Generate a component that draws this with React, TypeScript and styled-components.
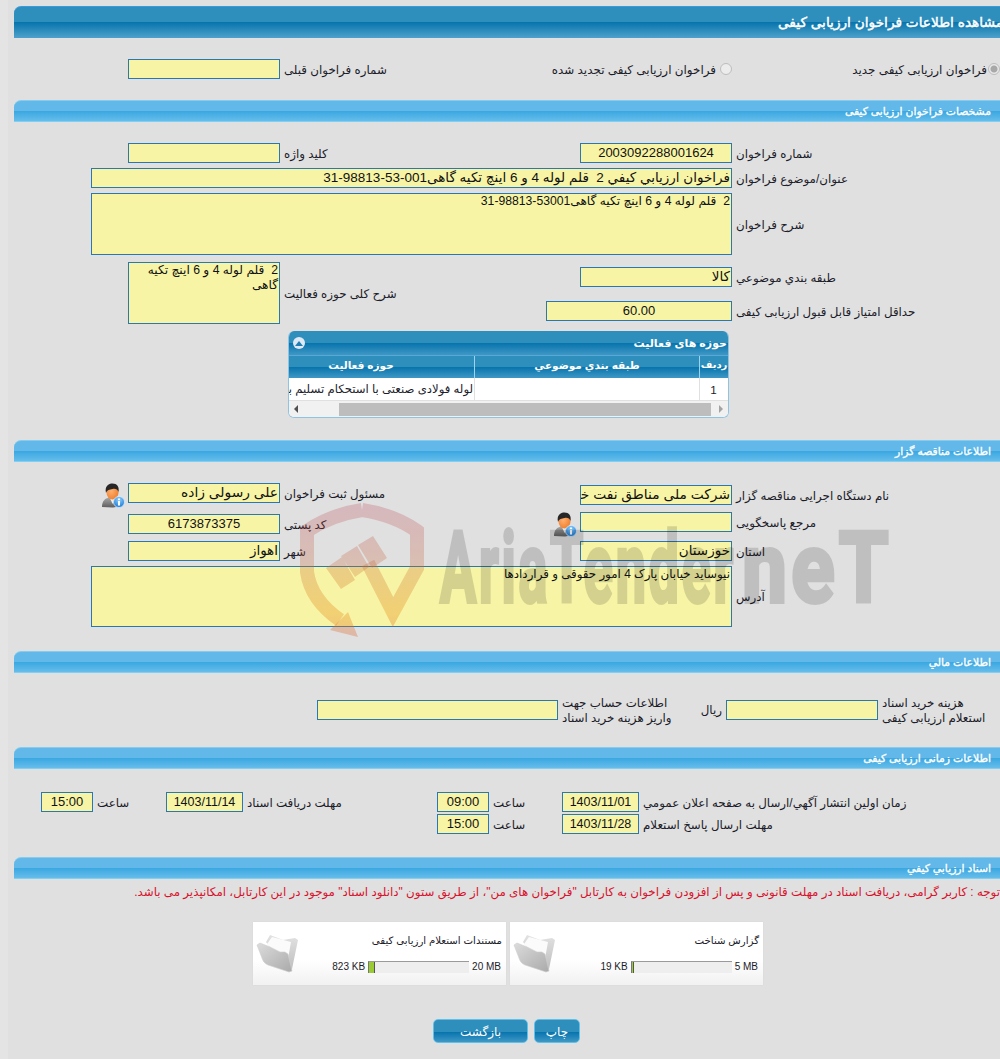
import React from 'react'
import styled, { createGlobalStyle } from 'styled-components'

const GlobalStyle = createGlobalStyle`
html, body {
  margin: 0;
  padding: 0;
  background: #e0e0e0;
  overflow: hidden;
}
`

const PersonInfoIcon = () => (
  <svg width="24" height="25" viewBox="0 0 24 25">
    <defs>
      <linearGradient id="suit" x1="0" y1="0" x2="0" y2="1">
        <stop offset="0" stopColor="#a8a8a8" />
        <stop offset="1" stopColor="#5e5e5e" />
      </linearGradient>
      <radialGradient id="face" cx="0.4" cy="0.4" r="0.7">
        <stop offset="0" stopColor="#ffb070" />
        <stop offset="1" stopColor="#ee7a28" />
      </radialGradient>
      <radialGradient id="info" cx="0.5" cy="0.3" r="0.7">
        <stop offset="0" stopColor="#8fd0fb" />
        <stop offset="1" stopColor="#1a78d8" />
      </radialGradient>
    </defs>
    <path d="M1 24 C1 18 4 15.500 8 14.500 L11.500 18 L15 14.500 C18 15 20 17 21 23 L12 24.500 Z" fill="url(#suit)" />
    <path d="M9 15 L11.500 21 L14 15 Z" fill="#eeeeee" />
    <ellipse cx="11.500" cy="9.500" rx="6" ry="7" fill="url(#face)" />
    <path d="M5 10 C3.500 3 7.500 0.500 11.500 0.500 C16 0.500 18.500 3.500 17.500 9 C16.500 6 14.500 5.500 11.500 6 C8.500 6.500 6 7 5 10 Z" fill="#262626" />
    <circle cx="18" cy="19" r="5.500" fill="url(#info)" stroke="#d8eefc" strokeWidth="0.8" />
    <rect x="17" y="18" width="2" height="4.500" fill="#fff" />
    <rect x="17" y="15.500" width="2" height="1.600" fill="#fff" />
  </svg>
)

const FolderIcon = () => (
  <svg width="44" height="40" viewBox="0 0 44 40">
    <defs>
      <linearGradient id="folderFront" x1="0" y1="0" x2="1" y2="1">
        <stop offset="0" stopColor="#dcdcdc" />
        <stop offset="1" stopColor="#aaaaaa" />
      </linearGradient>
      <linearGradient id="folderBack" x1="0" y1="0" x2="0" y2="1">
        <stop offset="0" stopColor="#e2e2e2" />
        <stop offset="1" stopColor="#bdbdbd" />
      </linearGradient>
    </defs>
    <path d="M10 8 L14 1 L27 6 L39 4 L42 6 L36 35 L32 37 Z" fill="url(#folderBack)" />
    <path d="M11 10 L16 3 L35 8 L31 30 Z" fill="#fbfbfb" />
    <path d="M1 11 L4 9 L14 13 L24 18 L29 18 L32 20 L36 37 L33 38 L12 31 C8 29 7 27 6 24 Z" fill="url(#folderFront)" stroke="#cfcfcf" strokeWidth="0.6" />
  </svg>
)

const Watermark = () => (
  <WatermarkLayer aria-hidden="true">
    <svg width="140" height="145" viewBox="295 498 140 145">
      <defs>
        <linearGradient id="shield" gradientUnits="userSpaceOnUse" x1="0" y1="505" x2="0" y2="640">
          <stop offset="0" stopColor="#b0243a" stopOpacity="0.21" />
          <stop offset="0.45" stopColor="#c86a3a" stopOpacity="0.28" />
          <stop offset="0.8" stopColor="#e8901a" stopOpacity="0.36" />
          <stop offset="1" stopColor="#d8502a" stopOpacity="0.3" />
        </linearGradient>
      </defs>
      <path
        d="M362 510 Q395 515 417 531 L417 568 L393 612 L368 563 M362 510 Q330 515 307 531 L307 572 Q311 600 340 620"
        fill="none"
        stroke="url(#shield)"
        strokeWidth="14"
        strokeLinejoin="miter"
      />
      <path
        d="M348 612 L358 637 L330 630 Z M326 568 L342 557 L355 580 L341 589 Z M341 556 L357 546 L369 567 L355 577 Z M358 545 L373 536 L387 558 L372 568 Z"
        fill="url(#shield)"
      />
    </svg>
    <WatermarkText>AriaTender</WatermarkText>
    <WatermarkNet>neT</WatermarkNet>
  </WatermarkLayer>
)

const App: React.FC = () => {
  return (
    <Page>
      <GlobalStyle />
      <Sheet>
        <TitleBar><span>مشاهده اطلاعات فراخوان ارزیابی کیفی</span></TitleBar>

        <Row $top={21}>
          <Option $w={268} $gap={1}><Radio $checked /><span>فراخوان ارزیابی کیفی جدید</span></Option>
          <Option $w={345} $gap={4}><Radio /><span>فراخوان ارزیابی کیفی تجدید شده</span></Option>
          <Label $w={107}>شماره فراخوان قبلی</Label>
          <Box $w={152} />
        </Row>

        <SectionHead $top={21}>مشخصات فراخوان ارزیابی کیفی</SectionHead>
        <Row $top={21}>
          <Label $w={268}>شماره فراخوان</Label>
          <Box $w={152} $center>2003092288001624</Box>
          <Label $w={300}>کلید واژه</Label>
          <Box $w={152} />
        </Row>
        <Row $top={5}>
          <Label $w={268}>عنوان/موضوع فراخوان</Label>
          <Box $w={641}>فراخوان ارزيابي کيفي 2&nbsp; قلم لوله 4 و 6 اینچ تکیه گاهی001-53-98813-31</Box>
        </Row>
        <Row $top={5}>
          <Label $w={268}>شرح فراخوان</Label>
          <Box $w={641} $h={62} $multi>2&nbsp; قلم لوله 4 و 6 اینچ تکیه گاهی53001-98813-31</Box>
        </Row>
        <Row $top={7}>
          <Stack $w={454}>
            <Row $top={5}>
              <Label $w={268}>طبقه بندي موضوعي</Label>
              <Box $w={152}>کالا</Box>
            </Row>
            <Row $top={14}>
              <Label $w={268}>حداقل امتیاز قابل قبول ارزیابی کیفی</Label>
              <Box $w={186} $center>60.00</Box>
            </Row>
          </Stack>
          <Label $w={266}>شرح کلی حوزه فعالیت</Label>
          <Box $w={152} $h={62} $multi>2&nbsp; قلم لوله 4 و 6 اینچ تکیه گاهی</Box>
        </Row>

        <GridPanel>
          <GridTitle>
            <span>حوزه های فعالیت</span>
            <Collapse>
              <svg width="8" height="5" viewBox="0 0 8 5"><path d="M0 5 L4 0 L8 5 Z" fill="#1f7fb5" /></svg>
            </Collapse>
          </GridTitle>
          <GridHead>
            <HeadCell $size={10}>رديف</HeadCell>
            <HeadCell>طبقه بندي موضوعي</HeadCell>
            <HeadCell>حوزه فعالیت</HeadCell>
          </GridHead>
          <GridRow>
            <DataCell $center>1</DataCell>
            <DataCell />
            <DataCell>لوله فولادی صنعتی با استحکام تسلیم بالا</DataCell>
          </GridRow>
          <ScrollBar>
            <ScrollArrow $right />
            <ScrollThumb />
            <ScrollArrow />
          </ScrollBar>
        </GridPanel>

        <SectionHead $top={22}>اطلاعات مناقصه گزار</SectionHead>
        <Row $top={21} $start>
          <Pair $top={2}>
            <Label $w={268}>نام دستگاه اجرایی مناقصه گزار</Label>
            <Box $w={152} $size={13.8}>شرکت ملی مناطق نفت خیز جنوب</Box>
          </Pair>
          <Pair>
            <Label $w={300}>مسئول ثبت فراخوان</Label>
            <Box $w={152} $size={13.8}>علی رسولی زاده</Box>
            <IconSlot><PersonInfoIcon /></IconSlot>
          </Pair>
        </Row>
        <Row $top={7} $start>
          <Pair>
            <Label $w={268}>مرجع پاسخگویی</Label>
            <Box $w={152} />
            <IconSlot><PersonInfoIcon /></IconSlot>
          </Pair>
          <Pair $top={2}>
            <Label $w={273}>کد پستی</Label>
            <Box $w={152} $center>6173873375</Box>
          </Pair>
        </Row>
        <Row $top={7}>
          <Label $w={268}>استان</Label>
          <Box $w={152}>خوزستان</Box>
          <Label $w={300}>شهر</Label>
          <Box $w={152}>اهواز</Box>
        </Row>
        <Row $top={5}>
          <Label $w={268}>آدرس</Label>
          <Box $w={641} $h={61} $multi $size={11.85}>نیوساید خیابان پارک 4 امور حقوقی و قراردادها</Box>
        </Row>

        <SectionHead $top={24}>اطلاعات مالي</SectionHead>
        <Row $top={27} $fixed>
          <Label $w={122}>هزینه خرید اسناد<br />استعلام ارزیابی کیفی</Label>
          <Box $w={152} />
          <Unit>ریال</Unit>
          <Label $w={146}>اطلاعات حساب جهت<br />واریز هزینه خرید اسناد</Label>
          <Box $w={241} />
        </Row>

        <SectionHead $top={27}>اطلاعات زمانی ارزیابی کیفی</SectionHead>
        <Row $top={23}>
          <Label $w={361}>زمان اولین انتشار آگهي/ارسال به صفحه اعلان عمومي</Label>
          <Box $w={77} $center $size={12.5}>1403/11/01</Box>
          <Label $w={73}>ساعت</Label>
          <Box $w={52} $center>09:00</Box>
          <Label $w={194}>مهلت دریافت اسناد</Label>
          <Box $w={77} $center $size={12.5}>1403/11/14</Box>
          <Label $w={73}>ساعت</Label>
          <Box $w={52} $center>15:00</Box>
        </Row>
        <Row $top={2}>
          <Label $w={361}>مهلت ارسال پاسخ استعلام</Label>
          <Box $w={77} $center $size={12.5}>1403/11/28</Box>
          <Label $w={73}>ساعت</Label>
          <Box $w={52} $center>15:00</Box>
        </Row>

        <SectionHead $top={23}>اسناد ارزیابي کیفي</SectionHead>
        <Notice>توجه : کاربر گرامی، دریافت اسناد در مهلت قانونی و پس از افزودن فراخوان به کارتابل "فراخوان های من"، از طریق ستون "دانلود اسناد" موجود در این کارتابل، امکانپذیر می باشد.</Notice>

        <Cards>
          <Card>
            <CardInfo>
              <CardTitle>گزارش شناخت</CardTitle>
              <Quota>
                <span>5 MB</span>
                <QuotaBar><QuotaFill style={{ width: 1 }} /></QuotaBar>
                <span>19 KB</span>
              </Quota>
            </CardInfo>
            <FolderIcon />
          </Card>
          <Card>
            <CardInfo>
              <CardTitle>مستندات استعلام ارزیابی کیفی</CardTitle>
              <Quota>
                <span>20 MB</span>
                <QuotaBar><QuotaFill style={{ width: 5 }} /></QuotaBar>
                <span>823 KB</span>
              </Quota>
            </CardInfo>
            <FolderIcon />
          </Card>
        </Cards>

        <Buttons>
          <Button $w={46}>چاپ</Button>
          <Button $w={95}>بازگشت</Button>
        </Buttons>
      </Sheet>
      <Watermark />
    </Page>
  )
}

export default App

const Page = styled.div`
  position: relative;
  width: 1000px;
  height: 1059px;
  overflow: hidden;
  box-sizing: border-box;
  background: #e0e0e0;
  border-left: 8px solid #e4e4e4;
  padding: 6px 0 0 6px;
  direction: rtl;
  font-family: "Liberation Sans", "DejaVu Sans", sans-serif;
  font-size: 12px;
  color: #1c1c2a;
`

const Sheet = styled.div`
  width: 986px;
  display: flex;
  flex-direction: column;
`

const TitleBar = styled.div`
  height: 32px;
  display: flex;
  align-items: center;
  border-top: 1px solid #3a9bdc;
  border-bottom: 1px solid #4a9fd0;
  box-sizing: border-box;
  border-top-left-radius: 7px;
  background: linear-gradient(#2e8fbd 0, #2e8fbd 15px, #0673ac 15px, #4a9fc8 100%);
  color: #fff;
  font-size: 13.7px;
  -webkit-text-stroke: 0.45px #fff;

  span {
    margin-right: -3px;
    white-space: nowrap;
  }
`

const SectionHead = styled.div<{ $top: number }>`
  margin-top: ${({ $top }) => $top}px;
  height: 22px;
  box-sizing: border-box;
  padding-right: 9px;
  display: flex;
  align-items: center;
  border-top: 1px solid #85cdf0;
  border-bottom: 1px solid #7fd0f2;
  border-top-left-radius: 7px;
  background: linear-gradient(#62b8e8 0, #62b8e8 10px, #39a7e1 10px, #66bdea 100%);
  color: #fff;
  font-size: 10.8px;
  -webkit-text-stroke: 0.35px #fff;
`

const Row = styled.div<{ $top?: number; $start?: boolean; $fixed?: boolean }>`
  display: flex;
  align-items: ${({ $start }) => ($start ? 'flex-start' : 'center')};
  margin-top: ${({ $top }) => $top ?? 0}px;
  height: ${({ $fixed }) => ($fixed ? '20px' : 'auto')};
`

const Pair = styled.div<{ $top?: number }>`
  display: flex;
  align-items: center;
  margin-top: ${({ $top }) => $top ?? 0}px;
`

const Stack = styled.div<{ $w: number }>`
  width: ${({ $w }) => $w}px;
  align-self: flex-start;
  display: flex;
  flex-direction: column;
`

const Label = styled.div<{ $w: number }>`
  width: ${({ $w }) => $w}px;
  flex: none;
  box-sizing: border-box;
  padding: 2px 0 0 4px;
  text-align: left;
  font-size: 11.85px;
  line-height: 15px;
  white-space: nowrap;
`

const Unit = styled.div`
  width: 22px;
  flex: none;
  box-sizing: border-box;
  padding-right: 4px;
  font-size: 11.85px;
  white-space: nowrap;
`

const Box = styled.div<{ $w: number; $h?: number; $center?: boolean; $multi?: boolean; $size?: number }>`
  width: ${({ $w }) => $w}px;
  height: ${({ $h }) => $h ?? 20}px;
  flex: none;
  box-sizing: border-box;
  border: 1px solid #2a78ad;
  background: #f7f5a5;
  padding: 0 1px;
  font-size: ${({ $size, $multi, $center }) => $size ?? ($multi ? 12.2 : $center ? 13 : 13.5)}px;
  line-height: ${({ $multi }) => ($multi ? '15px' : '18px')};
  text-align: ${({ $center }) => ($center ? 'center' : 'right')};
  white-space: ${({ $multi }) => ($multi ? 'normal' : 'nowrap')};
  overflow: hidden;
  color: #111;
`

const IconSlot = styled.div`
  width: 24px;
  height: 25px;
  margin: 0 3px -5px 0;
  flex: none;
  direction: ltr;
`

const Option = styled.div<{ $w: number; $gap: number }>`
  width: ${({ $w }) => $w}px;
  flex: none;
  display: flex;
  align-items: center;
  gap: ${({ $gap }) => $gap}px;
  font-size: 11.95px;

  span:last-child {
    padding-top: 2px;
  }
`

const Radio = styled.span<{ $checked?: boolean }>`
  width: 12px;
  height: 12px;
  flex: none;
  box-sizing: border-box;
  border-radius: 50%;
  border: 1px solid #bdbdbd;
  background: ${({ $checked }) =>
    $checked ? 'radial-gradient(circle, #a8a8a8 0, #a8a8a8 3px, #e8e8e8 4px)' : '#ececec'};
`

const GridPanel = styled.div`
  width: 441px;
  height: 87px;
  margin: 7px 271px 0 0;
  box-sizing: border-box;
  border-radius: 6px;
  overflow: hidden;
  border: 1px solid #8fc3e4;
  border-top: none;
  background: #fff;
`

const GridTitle = styled.div`
  height: 24px;
  display: flex;
  align-items: center;
  justify-content: space-between;
  padding: 0 1px 0 4px;
  background: linear-gradient(#2e8fbd 0, #2e8fbd 12px, #0673ac 12px, #3f98c5 100%);
  color: #fff;
  font-weight: bold;
  font-size: 11px;
`

const Collapse = styled.span`
  width: 12px;
  height: 12px;
  border-radius: 50%;
  background: #dfe9f3;
  display: flex;
  align-items: center;
  justify-content: center;
`

const GridHead = styled.div`
  height: 23px;
  display: grid;
  grid-template-columns: 29px 225px 226px;
  background: linear-gradient(#2e8fbd 0, #2e8fbd 11px, #0673ac 11px, #3f98c5 100%);
  border-top: 1px solid #5aa8d8;
  box-sizing: border-box;
`

const HeadCell = styled.div<{ $size?: number }>`
  display: flex;
  align-items: center;
  justify-content: center;
  color: #fff;
  font-weight: bold;
  font-size: ${({ $size }) => $size ?? 10.5}px;
  border-left: 1px solid #9ad4f2;
  padding-bottom: 5px;
  overflow: hidden;
  white-space: nowrap;

  &:last-child {
    border-left: none;
  }
`

const GridRow = styled.div`
  height: 23px;
  display: grid;
  grid-template-columns: 29px 225px 226px;
  border-bottom: 1px solid #e0e0e0;
  box-sizing: border-box;
`

const DataCell = styled.div<{ $center?: boolean }>`
  display: flex;
  align-items: center;
  justify-content: ${({ $center }) => ($center ? 'center' : 'flex-start')};
  font-size: 11.7px;
  padding-right: 1px;
  border-left: 1px solid #e0e0e0;
  overflow: hidden;
  white-space: nowrap;
  min-width: 0;

  &:last-child {
    border-left: none;
  }
`

const ScrollBar = styled.div`
  height: 16px;
  display: flex;
  align-items: center;
  background: #f1f1f1;
`

const ScrollThumb = styled.div`
  width: 372px;
  height: 13px;
  margin-right: 3px;
  background: #bdbdbd;
`

const ScrollArrow = styled.span<{ $right?: boolean }>`
  width: 0;
  height: 0;
  border-top: 4px solid transparent;
  border-bottom: 4px solid transparent;
  ${({ $right }) =>
    $right
      ? 'border-left: 4px solid #a3a3a3; margin: 0 5px;'
      : 'border-right: 4px solid #505050; margin: 0 auto 0 5px;'}
`

const Notice = styled.div`
  margin-top: 5px;
  height: 16px;
  line-height: 16px;
  font-size: 11.85px;
  color: #d9122c;
  white-space: nowrap;
`

const Cards = styled.div`
  margin: 22px 237px 0 0;
  display: flex;
  gap: 4px;
`

const Card = styled.div`
  width: 253px;
  height: 63px;
  box-sizing: border-box;
  padding: 0 4px 0 3px;
  display: flex;
  align-items: center;
  justify-content: space-between;
  background: linear-gradient(#ffffff 0, #ffffff 60%, #f1f1f1 100%);
  box-shadow: 0 0 1px #d0d0d0;
`

const CardInfo = styled.div`
  display: flex;
  flex-direction: column;
  gap: 12px;
  flex: 1;
  min-width: 0;
`

const CardTitle = styled.div`
  font-size: 10.2px;
  line-height: 14px;
  white-space: nowrap;
`

const Quota = styled.div`
  display: flex;
  align-items: center;
  gap: 3px;
  font-size: 10px;
  line-height: 14px;
  padding-right: 1px;

  span {
    white-space: nowrap;
    direction: ltr;
    unicode-bidi: isolate;
  }
`

const QuotaBar = styled.div`
  width: 101px;
  height: 12px;
  box-sizing: border-box;
  background: #eeeeee;
  border-top: 1px solid #9a9a9a;
  border-left: 1px solid #777;
  direction: ltr;
`

const QuotaFill = styled.div`
  height: 100%;
  background: #9acb34;
  border-right: 1px solid #555;
`

const Buttons = styled.div`
  margin: 34px 420px 0 0;
  display: flex;
  gap: 6px;
`

const Button = styled.button<{ $w: number }>`
  width: ${({ $w }) => $w}px;
  height: 24px;
  box-sizing: border-box;
  border: 1px solid #5fc0ea;
  border-radius: 5px;
  background: linear-gradient(#2e8fbd 0, #2e8fbd 12px, #0673ac 12px, #3f98c5 100%);
  color: #fff;
  font-family: inherit;
  font-size: 12px;
  padding: 2px 0 0;
`

const WatermarkLayer = styled.div`
  position: absolute;
  left: 0;
  top: 0;
  width: 1000px;
  height: 1059px;
  pointer-events: none;
  direction: ltr;

  svg {
    position: absolute;
    left: 287px;
    top: 498px;
  }
`

const WatermarkText = styled.div`
  position: absolute;
  left: 432px;
  top: 504px;
  font-family: Roboto, sans-serif;
  font-weight: 700;
  font-size: 98px;
  line-height: 130px;
  letter-spacing: 5px;
  color: #000;
  opacity: 0.14;
  -webkit-text-stroke: 4px #000;
  transform: scaleX(0.55);
  transform-origin: left center;
  white-space: nowrap;
`

const WatermarkNet = styled(WatermarkText)`
  left: 734px;
  transform: scaleX(0.82);
`
